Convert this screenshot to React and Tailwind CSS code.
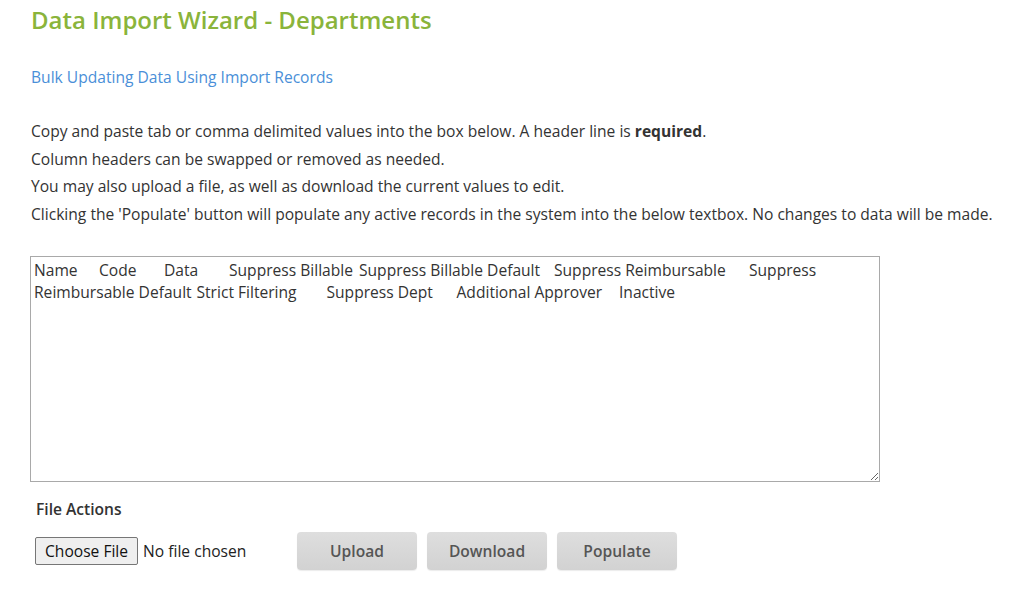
import { useState } from 'react'

const HEADERS = [
  'Name',
  'Code',
  'Data',
  'Suppress Billable',
  'Suppress Billable Default',
  'Suppress Reimbursable',
  'Suppress Reimbursable Default',
  'Strict Filtering',
  'Suppress Dept',
  'Additional Approver',
  'Inactive'
]

const ActionButton = ({ label }) => (
  <button
    type="button"
    className="w-[120px] h-[38px] rounded-[4px] bg-gradient-to-b from-[#dedede] to-[#d2d2d2] text-[15.6px] font-semibold text-[#555] shadow-[0_1px_1px_rgba(0,0,0,0.08)]"
  >
    {label}
  </button>
)

export default function App() {
  const [value, setValue] = useState(HEADERS.join('\t'))

  return (
    <div className="min-h-[599px] bg-white pl-[31px] pr-4 pt-[4px] font-['Open_Sans',sans-serif] text-[#333]">
      {/* Title */}
      <h1 className="text-[24px] leading-[32px] font-semibold text-[#8ab43b]">
        Data Import Wizard - Departments
      </h1>

      {/* Help link */}
      <a href="#" className="mt-[31px] block text-[15.6px] leading-[20px] text-[#4a8fd8]">
        Bulk Updating Data Using Import Records
      </a>

      {/* Instructions */}
      <div className="mt-[31px] text-[15.6px] leading-[27.6px]">
        <p>
          Copy and paste tab or comma delimited values into the box below. A header line is{' '}
          <strong className="font-bold">required</strong>.
        </p>
        <p>Column headers can be swapped or removed as needed.</p>
        <p>You may also upload a file, as well as download the current values to edit.</p>
        <p>
          Clicking the 'Populate' button will populate any active records in the system into the
          below textbox. No changes to data will be made.
        </p>
      </div>

      {/* Data box */}
      <textarea
        value={value}
        onChange={(e) => setValue(e.target.value)}
        className="mt-[28px] -ml-px block w-[850px] h-[226px] border border-[#a9a9a9] px-[3px] py-[2px] text-[15.6px] leading-[22px] text-[#333] [tab-size:32.5px] outline-none font-['Open_Sans',sans-serif]"
      />

      {/* File actions */}
      <div className="mt-[16px] pl-[5px] text-[15.6px] font-semibold leading-[22px]">File Actions</div>
      <div className="mt-[12px] flex items-center">
        <div className="flex items-center w-[266px] pl-[4px]">
          <button
            type="button"
            className="h-[28px] px-[9px] border border-[#767676] rounded-[2px] bg-[#efefef] text-[15.6px] text-[#111] font-['Open_Sans',sans-serif]"
          >
            Choose File
          </button>
          <span className="ml-[5px] text-[15.6px] text-[#222]">No file chosen</span>
        </div>
        <div className="flex gap-[10px]">
          <ActionButton label="Upload" />
          <ActionButton label="Download" />
          <ActionButton label="Populate" />
        </div>
      </div>
    </div>
  )
}
